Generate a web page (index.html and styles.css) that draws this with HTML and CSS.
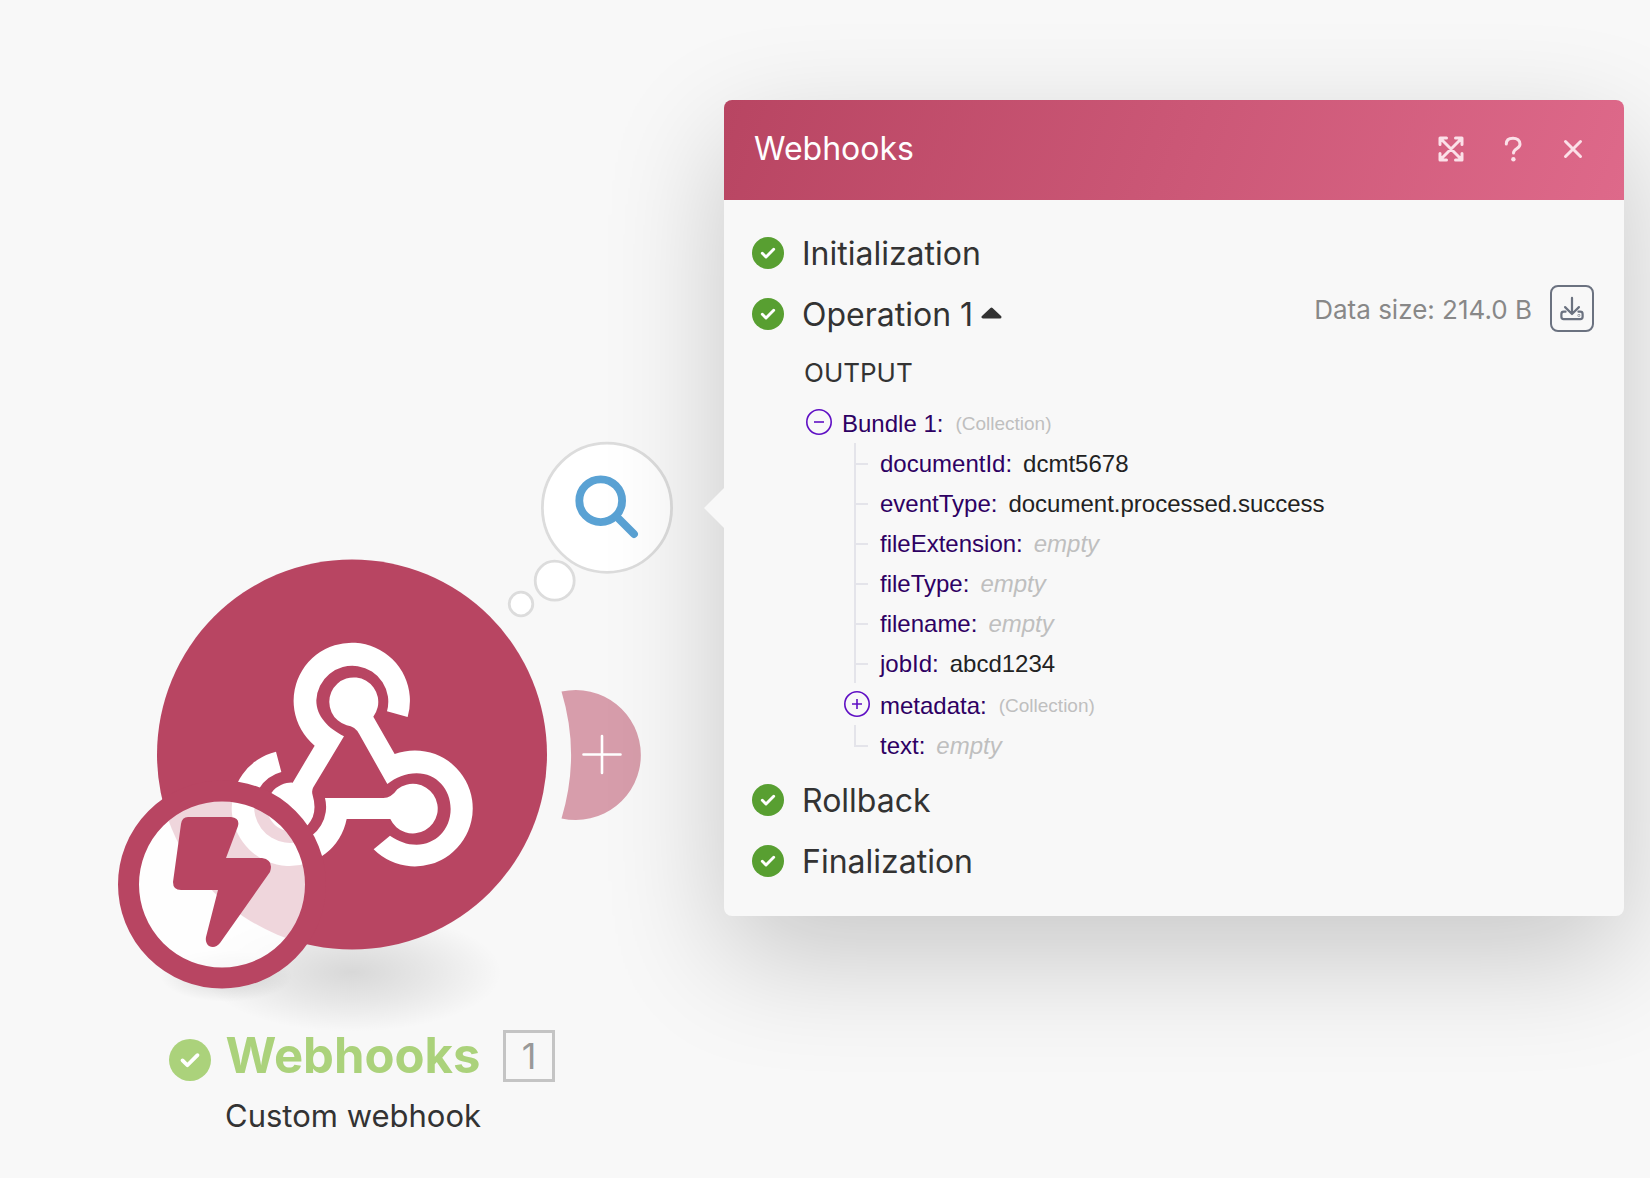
FILE: index.html
```html
<!DOCTYPE html>
<html lang="en">
<head>
    <meta charset="UTF-8">
    <meta name="viewport" content="width=device-width, initial-scale=1.0">
    <title>Webhooks</title>
    <link rel="stylesheet" href="styles.css">
</head>
<body>
    <svg class="sprite" aria-hidden="true">
        <symbol id="check" viewBox="0 0 32 32">
            <circle cx="16" cy="16" r="16" fill="currentColor"/>
            <path d="M10.300 16.300l3.700 3.700 7.700-7.700" fill="none" stroke="#fff" stroke-width="2.9" stroke-linecap="round" stroke-linejoin="round"/>
        </symbol>
    </svg>

    <main class="canvas">
        <!-- Module node -->
        <svg class="module" viewBox="110 550 450 490" aria-hidden="true">
            <defs>
                <radialGradient id="shade">
                    <stop offset="0" stop-color="#000" stop-opacity=".13"/>
                    <stop offset=".5" stop-color="#000" stop-opacity=".07"/>
                    <stop offset="1" stop-color="#000" stop-opacity="0"/>
                </radialGradient>
            </defs>
            <ellipse cx="352" cy="972" rx="150" ry="60" fill="url(#shade)"/>
            <ellipse cx="226" cy="976" rx="66" ry="26" fill="url(#shade)"/>
            <circle cx="352" cy="754.5" r="195" fill="#b84562"/>
            <g transform="translate(220 620) scale(.3333)" fill="#fff">
                <path d="M284 377A174.500 174.500 0 1 1 563 291L501 274A108 108 0 1 0 289 241C289 290 325 325 372 349L280 502Q274 512 278 526Q294 580 264 614A73 73 0 1 1 218 488Z"/>
                <path d="M524 402A174 174 0 1 1 461 688L510 647C535 664 560 674 590 674C645 674 692 630 692 567C692 508 650 460 590 460C556 460 528 473 502 492L418 343Q406 319 380 316A73.500 73.500 0 1 1 460 290Z"/>
                <path d="M168 395A174 174 0 1 0 380 597H511A74.500 74.500 0 1 0 532 508Q514 534 490 534H315A108 108 0 1 1 184 456Z"/>
            </g>
            <circle cx="222" cy="884.5" r="93.500" fill="#fff" fill-opacity=".78"/>
            <circle cx="222" cy="884.5" r="93.500" fill="none" stroke="#b84562" stroke-width="21"/>
            <path d="M188 817H231Q240 818 238 826L226 858H262Q274 860 270 872L220 943Q215 949 209 946Q205 943 206 937L218 890H181Q173 890 173 882L181 824Q182 817 188 817Z" fill="#b84562"/>
        </svg>

        <button class="add" type="button" aria-label="Add another module">
            <svg viewBox="561 690 80 130">
                <path d="M561.500 691.600A65 65 0 1 1 561.500 818.400A219 219 0 0 0 561.500 691.600Z" fill="#d79dab"/>
                <path d="M602 736v37M583.500 754.500h37" stroke="#fff" stroke-width="2.600" stroke-linecap="round"/>
            </svg>
        </button>

        <button class="inspect" type="button" aria-label="Show output">
            <svg viewBox="507 441 167 177">
                <g fill="#fff" stroke="#dcdcdc" stroke-width="2.800">
                    <circle cx="607" cy="507.700" r="64.600"/>
                    <circle cx="554.700" cy="580.700" r="19.500"/>
                    <circle cx="521" cy="604" r="11.800"/>
                </g>
                <g fill="none" stroke="#5aa2d4" stroke-width="7.800" stroke-linecap="round">
                    <circle cx="600.700" cy="500.700" r="21.400"/>
                    <path d="M616 516l18 18"/>
                </g>
            </svg>
        </button>

        <div class="label">
            <svg class="label-check"><use href="#check"/></svg>
            <h1 class="label-title">Webhooks</h1>
            <span class="label-id">1</span>
            <p class="label-sub">Custom webhook</p>
        </div>

        <!-- Execution details popup -->
        <section class="panel">
            <header class="panel-head">
                <h2 class="panel-title">Webhooks</h2>
                <button class="head-btn" type="button" aria-label="Expand">
                    <svg viewBox="0 0 26 26"><path d="M2.500 2.500l21 21M23.500 2.500l-21 21M2 8.500V2h6.500M17.500 2H24v6.500M24 17.500V24h-6.500M8.500 24H2v-6.500"/></svg>
                </button>
                <button class="head-btn head-help" type="button" aria-label="Help">
                    <svg viewBox="0 0 26 26"><path d="M7.300 8C7.300 4.200 10 2.200 14 2.200s7 2.200 7 6c0 4.600-6.500 4.600-6.500 8.800"/><circle cx="14.400" cy="23.200" r="2.200"/></svg>
                </button>
                <button class="head-btn" type="button" aria-label="Close">
                    <svg viewBox="0 0 26 26"><path d="M5.500 5.500l15 15M20.500 5.500l-15 15"/></svg>
                </button>
            </header>

            <div class="panel-body">
                <div class="step">
                    <svg class="step-check"><use href="#check"/></svg>
                    <span class="step-name">Initialization</span>
                </div>
                <div class="step">
                    <svg class="step-check"><use href="#check"/></svg>
                    <button class="step-name step-toggle" type="button" aria-expanded="true">
                        Operation 1
                        <svg class="caret" viewBox="0 0 21 12"><path d="M10.500 2L2 10h17z"/></svg>
                    </button>
                    <div class="size">
                        <span class="size-text">Data size: 214.0 B</span>
                        <button class="download" type="button" aria-label="Download">
                            <svg viewBox="0 0 26 26"><path d="M13 1.500v17M5.500 11.500l7.500 7.500 7.500-7.500M6 16.500H4a2.500 2.500 0 0 0-2.500 2.500v3A2.500 2.500 0 0 0 4 24.500h18a2.500 2.500 0 0 0 2.500-2.500V19a2.500 2.500 0 0 0-2.500-2.500h-2"/><circle cx="20.500" cy="20.500" r=".3"/></svg>
                        </button>
                    </div>
                </div>

                <h3 class="output">OUTPUT</h3>
                <div class="tree">
                    <div class="node">
                        <button class="toggle" type="button" aria-label="Collapse Bundle 1">
                            <svg viewBox="0 0 26 26"><circle cx="13" cy="13" r="12.200"/><path d="M8 13h10"/></svg>
                        </button>
                        <span class="key">Bundle 1:</span>
                        <span class="type">(Collection)</span>
                    </div>
                    <ul class="items">
                        <li class="item"><span class="key">documentId:</span> <span class="value">dcmt5678</span></li>
                        <li class="item"><span class="key">eventType:</span> <span class="value">document.processed.success</span></li>
                        <li class="item"><span class="key">fileExtension:</span> <em class="empty">empty</em></li>
                        <li class="item"><span class="key">fileType:</span> <em class="empty">empty</em></li>
                        <li class="item"><span class="key">filename:</span> <em class="empty">empty</em></li>
                        <li class="item"><span class="key">jobId:</span> <span class="value">abcd1234</span></li>
                        <li class="node">
                            <button class="toggle" type="button" aria-label="Expand metadata">
                                <svg viewBox="0 0 26 26"><circle cx="13" cy="13" r="12.200"/><path d="M8 13h10M13 8v10"/></svg>
                            </button>
                            <span class="key">metadata:</span>
                            <span class="type">(Collection)</span>
                        </li>
                        <li class="item item-last"><span class="key">text:</span> <em class="empty">empty</em></li>
                    </ul>
                </div>

                <div class="step">
                    <svg class="step-check"><use href="#check"/></svg>
                    <span class="step-name">Rollback</span>
                </div>
                <div class="step">
                    <svg class="step-check"><use href="#check"/></svg>
                    <span class="step-name">Finalization</span>
                </div>
            </div>
        </section>
    </main>
</body>
</html>
```
FILE: styles.css
```css
* {
    box-sizing: border-box;
}
body {
    margin: 0;
    background: #f8f8f8;
    color: #333;
    font-family: Inter, sans-serif;
}
h1, h2, h3, p, ul {
    margin: 0;
    padding: 0;
    font-weight: 400;
}
ul {
    list-style: none;
}
button {
    padding: 0;
    border: 0;
    background: none;
    color: inherit;
    font: inherit;
    cursor: pointer;
}
svg {
    display: block;
}
.sprite {
    display: none;
}
.canvas {
    position: relative;
    min-height: 100vh;
    overflow: hidden;
}

/* module node, placed on the free canvas */
.module {
    position: absolute;
    left: 110px;
    top: 550px;
    width: 450px;
}
.add {
    position: absolute;
    left: 561px;
    top: 690px;
    width: 80px;
}
.inspect {
    position: absolute;
    left: 507px;
    top: 441px;
    width: 167px;
}
.label {
    position: absolute;
    left: 169px;
    top: 1030px;
    display: grid;
    grid-template-columns: auto auto auto;
    align-items: center;
}
.label-check {
    width: 42px;
    height: 42px;
    margin: 8px 14px 0 0;
    color: #abd27b;
}
.label-title {
    color: #abd27b;
    font-size: 49px;
    line-height: 52px;
    font-weight: 700;
    text-align: center;
}
.label-id {
    width: 52px;
    margin-left: 22px;
    border: 3px solid #c4c4c4;
    color: #999;
    font-size: 36px;
    line-height: 46px;
    text-align: center;
}
.label-sub {
    grid-column: 2;
    margin-top: 14px;
    font-size: 31px;
    line-height: 40px;
    text-align: center;
    white-space: nowrap;
}

/* popup */
.panel {
    position: absolute;
    left: 724px;
    right: 26px;
    top: 100px;
    border-radius: 8px;
    background: #f8f8f8;
    box-shadow: 0 40px 120px rgba(0, 0, 0, .2);
}
.panel::before {
    content: "";
    position: absolute;
    left: -20px;
    top: 388px;
    border: 20px solid transparent;
    border-left: 0;
    border-right-color: #f8f8f8;
}
.panel-head {
    display: flex;
    align-items: center;
    gap: 35px;
    height: 100px;
    padding: 0 38px 2px 30px;
    border-radius: 8px 8px 0 0;
    background: linear-gradient(110deg, #b84562, #de698a);
    color: #fff;
}
.panel-title {
    flex: 1;
    font-size: 32px;
    line-height: 40px;
}
.head-btn svg {
    width: 26px;
    height: 26px;
    fill: none;
    stroke: #fbe0e8;
    stroke-width: 3;
    stroke-linecap: round;
    stroke-linejoin: round;
}
.head-btn circle {
    fill: #fbe0e8;
    stroke: none;
}
.panel-body {
    padding: 22px 30px 25px 28px;
}
.step {
    display: flex;
    align-items: center;
    height: 61px;
    font-size: 32px;
}
.step-check {
    width: 32px;
    height: 32px;
    margin-right: 18px;
    color: #589f31;
}
.step-name {
    padding-top: 2px;
}
.step-toggle {
    display: flex;
    align-items: center;
    gap: 8px;
}
.caret {
    width: 21px;
    height: 12px;
    margin-bottom: 4px;
    fill: #333;
    stroke: #333;
    stroke-width: 3;
    stroke-linejoin: round;
}
.size {
    display: flex;
    align-items: center;
    gap: 18px;
    margin-left: auto;
    padding-bottom: 10px;
    color: #888;
    font-size: 26px;
}
.size-text {
    padding-top: 2px;
}
.download {
    padding: 9px 8px;
    border: 2px solid #6b7280;
    border-radius: 8px;
}
.download svg {
    width: 24px;
    height: 25px;
    fill: none;
    stroke: #6b7280;
    stroke-width: 2.4;
    stroke-linecap: round;
    stroke-linejoin: round;
}
.output {
    padding-left: 52px;
    font-size: 26px;
    line-height: 57px;
}

/* bundle tree */
.tree {
    margin-bottom: 4px;
    padding-left: 54px;
    font-family: "Liberation Sans", Arial, sans-serif;
    font-size: 24px;
    line-height: 42px;
}
.node {
    display: flex;
    height: 42px;
    padding-top: 2px;
}
.toggle {
    width: 26px;
    margin-right: 10px;
    padding-bottom: 2px;
}
.toggle svg {
    width: 26px;
    height: 26px;
    fill: none;
    stroke: #5f0fc4;
    stroke-width: 1.6;
}
.items {
    padding-left: 38px;
}
.item {
    display: flex;
    gap: 11px;
    position: relative;
    height: 40px;
    padding-left: 36px;
}
.item::before,
.item::after {
    content: "";
    position: absolute;
    left: 10px;
    background: #e4e4ea;
}
.item::before {
    top: 0;
    bottom: 0;
    width: 2px;
}
.item::after {
    top: 20px;
    width: 14px;
    height: 2px;
}
.item-last::before {
    bottom: 20px;
}
.key {
    color: #2e0063;
}
.value {
    color: #222;
}
.empty {
    color: #bfbfbf;
}
.type {
    margin-left: 12px;
    color: #bfbfbf;
    font-size: 19px;
}
```
